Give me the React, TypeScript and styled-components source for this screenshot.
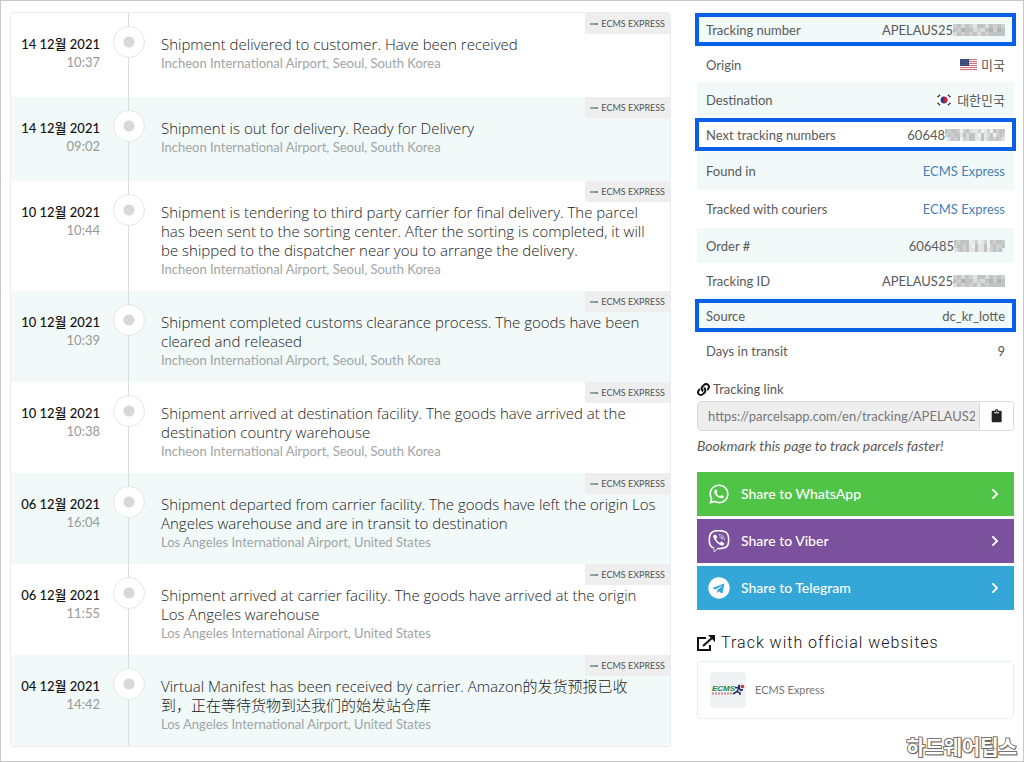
import React from "react";
import styled, { createGlobalStyle } from "styled-components";
import { FaWhatsapp, FaViber, FaTelegram, FaChevronRight, FaLink, FaClipboard } from "react-icons/fa";

const sans = `Lato, "Noto Sans CJK KR", sans-serif`;

const Global = createGlobalStyle`
  *, *::before, *::after { box-sizing: border-box; }
  body { margin: 0; background: #fff; font-family: ${sans}; font-size: 13px; line-height: 18px; color: #5a5a5a; }
`;

const Page = styled.div`
  position: relative;
  border: 1px solid #c8c8c8;
  min-height: 100vh;
  padding: 11px 9px 0;
`;
const Columns = styled.main`
  display: grid;
  grid-template-columns: minmax(0, 661fr) minmax(0, 317fr);
  column-gap: 26px;
  align-items: start;
`;
const Timeline = styled.ol`
  list-style: none;
  margin: 0;
  padding: 0;
  border: 1px solid #ececec;
  border-radius: 3px;
`;
const Event = styled.li`
  position: relative;
  display: grid;
  grid-template-columns: 89px 57px minmax(0, 1fr);
  min-height: 84px;
  padding: 22px 10px 13px 0;
  &:nth-child(even) { background: #f1f9f9; }
`;
const When = styled.div`
  text-align: right;
  font-size: 13px;
  line-height: 17px;
  color: #999;
`;
const Day = styled.time`
  display: block;
  font-weight: 500;
  line-height: 19px;
  color: #111;
`;
const Rail = styled.div`
  margin: -22px 0 -13px;
  padding-top: 13px;
  display: flex;
  justify-content: center;
  background: linear-gradient(#dcdcdc, #dcdcdc) center / 1px 100% no-repeat;
`;
const Marker = styled.span`
  width: 32px;
  height: 32px;
  border: 1px solid #e6e6e6;
  border-radius: 50%;
  background: radial-gradient(circle, #d8d8d8 5px, #fff 6px);
`;
const Status = styled.div`
  padding-left: 4px;
  font-family: "Open Sans", "Noto Sans CJK SC", sans-serif;
  font-size: 15px;
  font-weight: 300;
  line-height: 19px;
  white-space: pre-line;
  color: #222;
`;
const Place = styled.div`
  font-family: ${sans};
  font-size: 13px;
  font-weight: 400;
  line-height: 18px;
  color: #a0a5a5;
`;
const Carrier = styled.span`
  position: absolute;
  top: 0;
  right: 0;
  display: flex;
  align-items: center;
  gap: 3px;
  height: 21px;
  padding: 0 5px;
  background: #eee;
  font-size: 9px;
  color: #555;
`;

const Details = styled.dl`margin: 0;`;
const Detail = styled.div<{ $tall?: boolean; $marked?: boolean }>`
  position: relative;
  display: flex;
  justify-content: space-between;
  align-items: center;
  height: ${(p) => (p.$tall ? 38 : 35)}px;
  padding: 0 9px;
  &:nth-child(odd) { background: #f1f9f9; }
  ${(p) => p.$marked && `&::after { content: ""; position: absolute; inset: 1px -2px; border: 4px solid #0860e6; }`}
`;
const Value = styled.dd`
  margin: 0;
  display: flex;
  align-items: center;
`;
const Flag = styled.svg`
  width: 17px;
  height: 12px;
  margin-right: 4px;
`;
const Link = styled.a`
  color: #4a7fb5;
  text-decoration: none;
`;
const Field = styled.div`margin-top: 12px;`;
const FieldLabel = styled.label`
  display: flex;
  align-items: center;
  gap: 3px;
  svg { color: #111; }
`;
const InputGroup = styled.div`
  display: flex;
  height: 30px;
  margin-top: 3px;
  border: 1px solid #d8d8d8;
  border-radius: 4px;
  overflow: hidden;
`;
const UrlInput = styled.input`
  flex: 1;
  min-width: 0;
  border: 0;
  padding: 0 4px 0 10px;
  background: #eee;
  font: 13px ${sans};
  color: #777;
`;
const CopyButton = styled.button`
  width: 34px;
  border: 0;
  border-left: 1px solid #d8d8d8;
  padding: 0;
  background: #fff;
  color: #222;
  display: grid;
  place-items: center;
`;
const Hint = styled.p`
  margin: 6px 0 0;
  font-size: 14px;
  font-style: italic;
`;
const ShareList = styled.div`
  display: grid;
  gap: 3px;
  margin-top: 17px;
`;
const Share = styled.a<{ $color: string }>`
  display: flex;
  align-items: center;
  gap: 11px;
  height: 44px;
  padding: 0 13px 0 11px;
  background: ${(p) => p.$color};
  color: #fff;
  font-size: 14px;
  font-weight: 500;
  text-decoration: none;
  span { flex: 1; }
`;
const Heading = styled.h2`
  display: flex;
  align-items: center;
  gap: 6px;
  margin: 23px 0 8px;
  font: 300 16px/20px Roboto, sans-serif;
  letter-spacing: 1px;
  color: #111;
`;
const Site = styled.a`
  display: flex;
  align-items: center;
  gap: 9px;
  height: 58px;
  padding: 0 12px;
  border: 1px solid #e8eeee;
  border-radius: 4px;
  font-size: 11px;
  color: #777;
  text-decoration: none;
`;
const LogoTile = styled.svg`
  width: 36px;
  height: 36px;
  border-radius: 4px;
  background: #f0f1f2;
`;
const Watermark = styled.div`
  position: absolute;
  right: 6px;
  bottom: 0;
  font: 700 20px/28px "Noto Sans CJK KR", sans-serif;
  color: #fff;
  -webkit-text-stroke: 2px #777;
  paint-order: stroke fill;
  text-shadow: 1px 1px 1px #666;
`;

const shades = ["#f0f2f2", "#e4e6e6", "#dadbdb", "#cfd0d0", "#c1c2c2", "#b2b3b3"];
const codeMask = ["3424314424343", "4354423245354", "2434342434444"];
const numberMask = ["43443034211301304344", "34344142441041240343", "02434032441141343431"];
const orderMask = ["43444013013043443", "34434104114034334", "13434114114134340"];

function Mask({ rows, cell }: { rows: string[]; cell: number }) {
  return (
    <svg width={rows[0].length * cell} height={12} shapeRendering="crispEdges" aria-hidden="true">
      {rows.flatMap((row, y) =>
        [...row].map((level, x) => (
          <rect key={`${x}-${y}`} x={x * cell} y={y * 4} width={cell} height={4} fill={shades[Number(level)]} />
        )),
      )}
    </svg>
  );
}

function UsFlag() {
  return (
    <Flag viewBox="0 0 17 12" aria-hidden="true">
      <rect width="17" height="12" fill="#f7eeee" />
      {[0, 2, 4, 6, 8, 10].map((y) => <rect key={y} y={y} width="17" height="1" fill="#d0747d" />)}
      <rect width="9" height="7" fill="#3a4a78" />
      <path d="M1 1.5h7M1 3.5h7M1 5.5h7" stroke="#66749b" strokeWidth=".6" strokeDasharray="1 1" />
    </Flag>
  );
}

function KoreaFlag() {
  return (
    <Flag viewBox="0 0 17 12" aria-hidden="true">
      <rect width="17" height="12" fill="#fff" />
      <circle cx="8" cy="6" r="3.4" fill="#1f3f8f" />
      <path d="M5.2 4.1A3.4 3.4 0 0 1 10.9 7.8A1.7 1.7 0 0 1 8 6A1.7 1.7 0 0 0 5.2 4.1Z" fill="#cf2338" />
      <path d="M1.5 3 4 1M12 1l2.5 2M1.5 9 4 11M12 11l2.5-2" stroke="#333" strokeWidth="1.8" strokeDasharray="1.4 .4" />
    </Flag>
  );
}

function EcmsLogo() {
  return (
    <LogoTile viewBox="0 0 36 36" aria-hidden="true">
      <text x="2" y="19" fontFamily="Liberation Sans" fontSize="8" fontWeight="700" fontStyle="italic" fill="#23854a">ECMS</text>
      <path d="M2 21.5h20" stroke="#c98b8b" strokeWidth="2" strokeDasharray="2 1" />
      <path d="M25 15.5l4 .5 2 2.5 2-1M29 16l-2 3.5 3 1.5v2M27 19.5l-4 2.5M30 15l-1 1" fill="none" stroke="#1f2f6b" strokeWidth="1.5" />
      <circle cx="29" cy="14" r="1.2" fill="#1f2f6b" />
      <circle cx="32.5" cy="14.5" r="1.8" fill="#c9343c" />
    </LogoTile>
  );
}

const incheon = "Incheon International Airport, Seoul, South Korea";
const losAngeles = "Los Angeles International Airport, United States";

const events = [
  { day: "14 12월 2021", time: "10:37", status: "Shipment delivered to customer. Have been received", place: incheon },
  { day: "14 12월 2021", time: "09:02", status: "Shipment is out for delivery. Ready for Delivery", place: incheon },
  { day: "10 12월 2021", time: "10:44", status: "Shipment is tendering to third party carrier for final delivery. The parcel has been sent to the sorting center. After the sorting is completed, it will be shipped to the dispatcher near you to arrange the delivery.", place: incheon },
  { day: "10 12월 2021", time: "10:39", status: "Shipment completed customs clearance process. The goods have been cleared and released", place: incheon },
  { day: "10 12월 2021", time: "10:38", status: "Shipment arrived at destination facility. The goods have arrived at the destination country warehouse", place: incheon },
  { day: "06 12월 2021", time: "16:04", status: "Shipment departed from carrier facility. The goods have left the origin Los Angeles warehouse and are in transit to destination", place: losAngeles },
  { day: "06 12월 2021", time: "11:55", status: "Shipment arrived at carrier facility. The goods have arrived at the origin Los Angeles warehouse", place: losAngeles },
  { day: "04 12월 2021", time: "14:42", status: "Virtual Manifest has been received by carrier. Amazon的发货预报已收\n到，正在等待货物到达我们的始发站仓库", place: losAngeles },
];

export default function App() {
  return (
    <Page>
      <Global />
      <Columns>
        <Timeline>
          {events.map(({ day, time, status, place }) => (
            <Event key={day + time}>
              <When><Day>{day}</Day>{time}</When>
              <Rail><Marker /></Rail>
              <Status>{status}<Place>{place}</Place></Status>
              <Carrier>
                <svg width="8" height="4" viewBox="0 0 8 4" aria-hidden="true">
                  <path d="M0 2h5" stroke="#6d8f7c" strokeWidth="1.5" />
                  <path d="M5 2h3" stroke="#666c88" strokeWidth="1.5" />
                </svg>
                ECMS EXPRESS
              </Carrier>
            </Event>
          ))}
        </Timeline>
        <aside>
          <Details>
            <Detail $marked><dt>Tracking number</dt><Value>APELAUS25<Mask rows={codeMask} cell={4} /></Value></Detail>
            <Detail><dt>Origin</dt><Value><UsFlag />미국</Value></Detail>
            <Detail><dt>Destination</dt><Value><KoreaFlag />대한민국</Value></Detail>
            <Detail $marked><dt>Next tracking numbers</dt><Value>60648<Mask rows={numberMask} cell={3} /></Value></Detail>
            <Detail $tall><dt>Found in</dt><Value><Link href="#">ECMS Express</Link></Value></Detail>
            <Detail $tall><dt>Tracked with couriers</dt><Value><Link href="#">ECMS Express</Link></Value></Detail>
            <Detail><dt>Order #</dt><Value>606485<Mask rows={orderMask} cell={3} /></Value></Detail>
            <Detail><dt>Tracking ID</dt><Value>APELAUS25<Mask rows={codeMask} cell={4} /></Value></Detail>
            <Detail $marked><dt>Source</dt><Value>dc_kr_lotte</Value></Detail>
            <Detail><dt>Days in transit</dt><Value>9</Value></Detail>
          </Details>
          <Field>
            <FieldLabel htmlFor="url"><FaLink />Tracking link</FieldLabel>
            <InputGroup>
              <UrlInput id="url" readOnly defaultValue="https://parcelsapp.com/en/tracking/APELAUS2" />
              <CopyButton type="button" aria-label="Copy"><FaClipboard /></CopyButton>
            </InputGroup>
            <Hint>Bookmark this page to track parcels faster!</Hint>
          </Field>
          <ShareList>
            <Share href="#" $color="#4fc447"><FaWhatsapp size={22} /><span>Share to WhatsApp</span><FaChevronRight size={12} /></Share>
            <Share href="#" $color="#7b519d"><FaViber size={22} /><span>Share to Viber</span><FaChevronRight size={12} /></Share>
            <Share href="#" $color="#35a6d8"><FaTelegram size={22} /><span>Share to Telegram</span><FaChevronRight size={12} /></Share>
          </ShareList>
          <Heading>
            <svg width="18" height="16" viewBox="0 0 18 16" fill="none" stroke="#111" strokeWidth="2" aria-hidden="true">
              <path d="M9 3H1v12h12v-5M6 11 15 3" />
              <path d="M11 0h7v7z" fill="#111" stroke="none" />
            </svg>
            Track with official websites
          </Heading>
          <Site href="#"><EcmsLogo />ECMS Express</Site>
        </aside>
      </Columns>
      <Watermark>하드웨어팁스</Watermark>
    </Page>
  );
}
